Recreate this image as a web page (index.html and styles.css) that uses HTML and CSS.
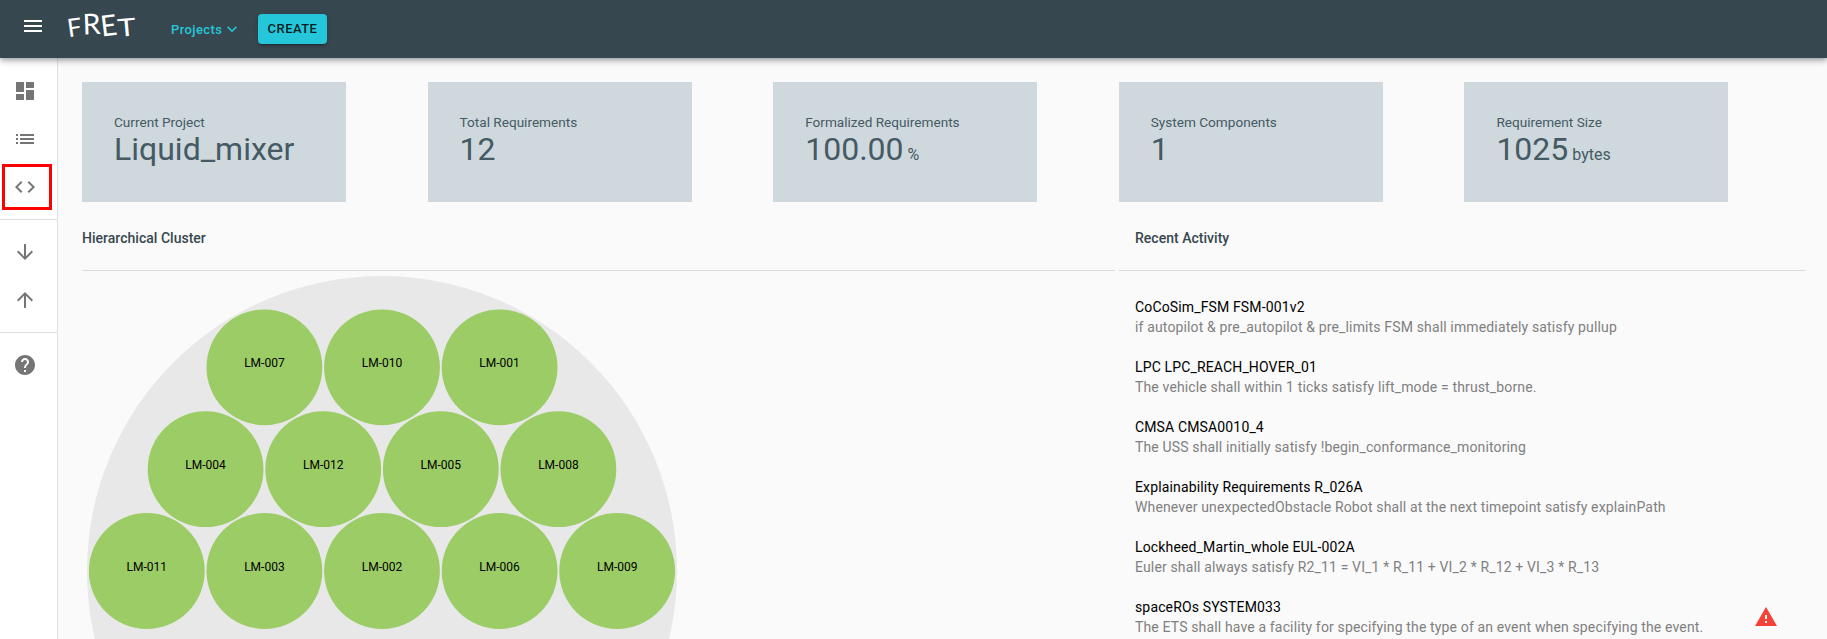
FILE: index.html
```html
<!DOCTYPE html>
<html lang="en">
<head>
<meta charset="utf-8">
<title>FRET</title>
<link rel="stylesheet" href="styles.css">
</head>
<body>
<header class="appbar">
  <svg class="icon menu" viewBox="0 0 24 24"><path d="M3 18h18v-2H3v2zm0-5h18v-2H3v2zm0-7v2h18V6H3z"/></svg>
  <div class="logo"><span class="lf">F</span><span class="lr">R</span><span class="le">E</span><span class="lt">T</span></div>
  <div class="projects">Projects<svg class="chevron" viewBox="0 0 24 24"><path d="M16.59 8.59 12 13.17 7.41 8.59 6 10l6 6 6-6z"/></svg></div>
  <div class="create">CREATE</div>
</header>
<div class="body">
  <nav class="sidebar">
    <div class="group">
      <div class="item"><svg class="icon" viewBox="0 0 24 24"><path d="M3 13h8V3H3v10zm0 8h8v-6H3v6zm10 0h8V11h-8v10zm0-18v6h8V3h-8z"/></svg></div>
      <div class="item"><svg class="icon" viewBox="0 0 24 24"><path d="M3 13h2v-2H3v2zm0 4h2v-2H3v2zm0-8h2V7H3v2zm4 4h14v-2H7v2zm0 4h14v-2H7v2zM7 7v2h14V7H7z"/></svg></div>
      <div class="item selected"><svg class="icon" viewBox="0 0 24 24"><path d="M9.4 16.6 4.8 12l4.6-4.6L8 6l-6 6 6 6 1.4-1.4zm5.2 0 4.6-4.6-4.6-4.6L16 6l6 6-6 6-1.4-1.4z"/></svg></div>
    </div>
    <div class="group">
      <div class="item"><svg class="icon" viewBox="0 0 24 24"><path d="m20 12-1.41-1.41L13 16.17V4h-2v12.17l-5.58-5.59L4 12l8 8 8-8z"/></svg></div>
      <div class="item"><svg class="icon" viewBox="0 0 24 24"><path d="m4 12 1.41 1.41L11 7.83V20h2V7.83l5.58 5.59L20 12l-8-8-8 8z"/></svg></div>
    </div>
    <div class="group">
      <div class="item"><svg class="icon" viewBox="0 0 24 24"><path d="M12 2C6.48 2 2 6.48 2 12s4.48 10 10 10 10-4.48 10-10S17.52 2 12 2zm1 17h-2v-2h2v2zm2.07-7.75-.9.92C13.45 12.9 13 13.5 13 15h-2v-.5c0-1.1.45-2.1 1.17-2.83l1.24-1.26c.37-.36.59-.86.59-1.41 0-1.1-.9-2-2-2s-2 .9-2 2H8c0-2.21 1.79-4 4-4s4 1.79 4 4c0 .88-.36 1.68-.93 2.25z"/></svg></div>
    </div>
  </nav>
  <main class="main">
    <section class="cards">
      <div class="card"><div class="label">Current Project</div><div class="value">Liquid_mixer</div></div>
      <div class="card"><div class="label">Total Requirements</div><div class="value">12</div></div>
      <div class="card"><div class="label">Formalized Requirements</div><div class="value">100.00<span class="unit"> %</span></div></div>
      <div class="card"><div class="label">System Components</div><div class="value">1</div></div>
      <div class="card"><div class="label">Requirement Size</div><div class="value">1025<span class="unit"> bytes</span></div></div>
    </section>
    <div class="panels">
      <section class="cluster">
        <h2 class="heading">Hierarchical Cluster</h2>
        <svg class="pack" width="600" height="368" viewBox="0 0 600 368">
          <circle class="root" cx="300" cy="300" r="295"/>
          <g class="leaves">
            <circle cx="182.4" cy="96.3" r="57.9"/><circle cx="300" cy="96.3" r="57.9"/><circle cx="417.6" cy="96.3" r="57.9"/>
            <circle cx="123.6" cy="198.2" r="57.9"/><circle cx="241.2" cy="198.2" r="57.9"/><circle cx="358.8" cy="198.2" r="57.9"/><circle cx="476.4" cy="198.2" r="57.9"/>
            <circle cx="64.8" cy="300" r="57.9"/><circle cx="182.4" cy="300" r="57.9"/><circle cx="300" cy="300" r="57.9"/><circle cx="417.6" cy="300" r="57.9"/><circle cx="535.2" cy="300" r="57.9"/>
          </g>
          <g class="names">
            <text x="182.4" y="96">LM-007</text><text x="300" y="96">LM-010</text><text x="417.6" y="96">LM-001</text>
            <text x="123.6" y="198">LM-004</text><text x="241.2" y="198">LM-012</text><text x="358.8" y="198">LM-005</text><text x="476.4" y="198">LM-008</text>
            <text x="64.8" y="300">LM-011</text><text x="182.4" y="300">LM-003</text><text x="300" y="300">LM-002</text><text x="417.6" y="300">LM-006</text><text x="535.2" y="300">LM-009</text>
          </g>
        </svg>
      </section>
      <section class="activity">
        <h2 class="heading">Recent Activity</h2>
        <ul class="list">
          <li><div class="name">CoCoSim_FSM FSM-001v2</div><div class="desc">if autopilot &amp; pre_autopilot &amp; pre_limits FSM shall immediately satisfy pullup</div></li>
          <li><div class="name">LPC LPC_REACH_HOVER_01</div><div class="desc">The vehicle shall within 1 ticks satisfy lift_mode = thrust_borne.</div></li>
          <li><div class="name">CMSA CMSA0010_4</div><div class="desc">The USS shall initially satisfy !begin_conformance_monitoring</div></li>
          <li><div class="name">Explainability Requirements R_026A</div><div class="desc">Whenever unexpectedObstacle Robot shall at the next timepoint satisfy explainPath</div></li>
          <li><div class="name">Lockheed_Martin_whole EUL-002A</div><div class="desc">Euler shall always satisfy R2_11 = VI_1 * R_11 + VI_2 * R_12 + VI_3 * R_13</div></li>
          <li><div class="name">spaceROs SYSTEM033</div><div class="desc">The ETS shall have a facility for specifying the type of an event when specifying the event.</div></li>
        </ul>
      </section>
    </div>
  </main>
</div>
<svg class="icon warning" viewBox="0 0 24 24"><path d="M1 21h22L12 2 1 21zm12-3h-2v-2h2v2zm0-4h-2v-4h2v4z"/></svg>
</body>
</html>
```
FILE: styles.css
```css
* { box-sizing: border-box; }
html { height: 100%; overflow: hidden; }
body {
  margin: 0;
  height: 100%;
  overflow: hidden;
  display: flex;
  flex-direction: column;
  background: #fafafa;
  font-family: Roboto, "Liberation Sans", sans-serif;
}
.icon { display: block; width: 24px; height: 24px; fill: #757575; }
.appbar {
  position: relative;
  z-index: 2;
  flex: none;
  height: 58px;
  display: flex;
  align-items: center;
  padding-left: 21px;
  background: #37474f;
  box-shadow: 0 2px 4px -1px rgba(0,0,0,.2), 0 4px 5px rgba(0,0,0,.14), 0 1px 10px rgba(0,0,0,.12);
}
.menu { fill: #fff; margin-bottom: 6px; }
.logo {
  display: flex;
  width: 70px;
  margin: 0 35px 9px 21px;
  color: #fff;
  font: 400 27px/30px Lato, sans-serif;
  text-align: center;
}
.logo span { display: block; transform-origin: 50% 50%; }
.lf { width: 17px; transform: translateY(2px) rotate(-8deg) scale(.95, .93); }
.lr { width: 17px; transform: translateY(-1.5px) rotate(-2deg) scale(1.06, 1.06); }
.le { width: 17px; transform: rotate(-7deg) scale(1.05, 1.06); }
.lt { width: 19px; transform: translateY(2px) rotate(-5deg) scale(1.15, .92); }
.projects {
  display: flex;
  align-items: center;
  width: 87px;
  color: #26c6da;
  font-size: 13px;
  font-weight: 500;
  letter-spacing: .4px;
}
.chevron { width: 20px; height: 20px; fill: #26c6da; }
.create {
  width: 69px;
  height: 30px;
  border-radius: 4px;
  background: #26c6da;
  color: rgba(0,0,0,.87);
  font-size: 13px;
  font-weight: 500;
  line-height: 30px;
  letter-spacing: .46px;
  text-align: center;
  box-shadow: 0 3px 1px -2px rgba(0,0,0,.2), 0 2px 2px rgba(0,0,0,.14), 0 1px 5px rgba(0,0,0,.12);
}
.body { flex: 1; min-height: 0; display: flex; overflow: hidden; }
.sidebar {
  flex: none;
  width: 58px;
  padding-top: 1px;
  background: #fff;
  border-right: 1px solid #e0e0e0;
}
.group { padding: 8px 0; border-bottom: 1px solid #e0e0e0; }
.group:last-child { border-bottom: 0; }
.item { height: 48px; padding: 12px 13px; }
.selected {
  width: 50px;
  height: 46px;
  margin: 1px 0 1px 2px;
  padding: 8px;
  border: 3px solid #f00;
}
.main { flex: 1; padding: 24px 17px 0 24px; min-width: 0; }
.cards { display: grid; grid-template-columns: repeat(5, 345.6px); }
.card {
  width: 264px;
  height: 120px;
  padding: 30px 32px;
  background: #cfd8dc;
  color: #455a64;
  white-space: nowrap;
}
.label { font-size: 13.6px; line-height: 20px; margin-bottom: 1px; }
.value { font-size: 32px; line-height: 32px; }
.unit { font-size: 16px; }
.panels { display: grid; grid-template-columns: 1033px 687px; column-gap: 4px; }
.heading {
  height: 69px;
  margin: 0;
  padding-top: 26px;
  border-bottom: 1px solid #dcdcdc;
  color: #37474f;
  font-size: 14px;
  font-weight: 500;
  line-height: 20px;
  letter-spacing: .02px;
}
.pack { display: block; }
.root { fill: #e8e8e8; }
.leaves { fill: #9ccc65; }
.names { font-size: 12px; text-anchor: middle; fill: #000; }
.activity .heading { padding-left: 16px; }
.list { list-style: none; margin: 0; padding: 16px 16px 0; height: 368px; overflow: hidden; }
.list li { height: 60px; padding-top: 10px; font-size: 14px; line-height: 20px; letter-spacing: .145px; white-space: nowrap; }
.list li:last-child { height: 50px; }
.name { color: #000; }
.desc { color: #808080; }
.warning { position: absolute; left: 1754px; top: 605px; fill: #f44336; }
```
